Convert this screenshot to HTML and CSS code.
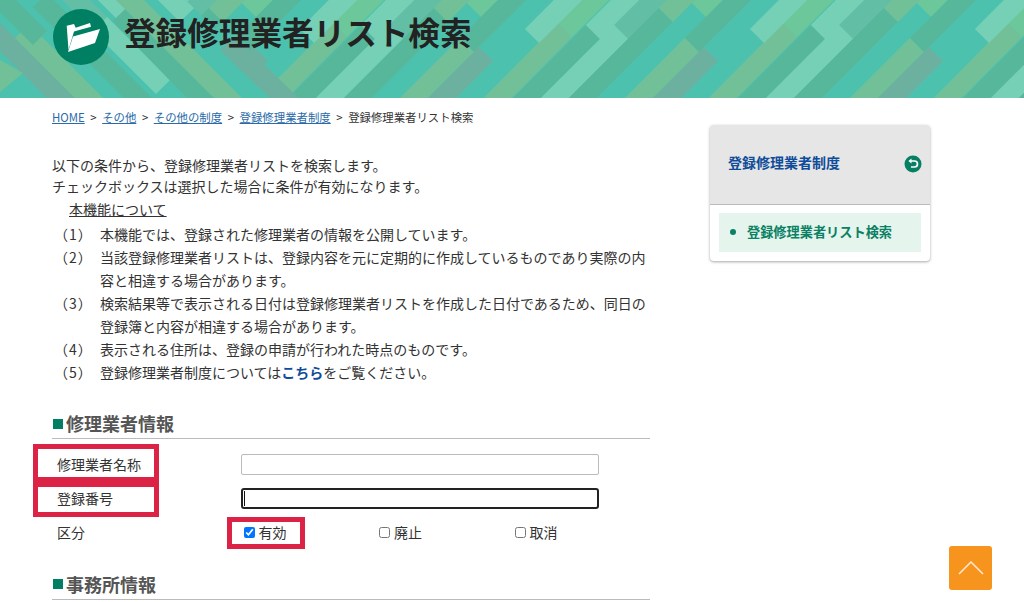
FILE: index.html
```html
<!DOCTYPE html>
<html lang="ja">
<head>
<meta charset="utf-8">
<title>登録修理業者リスト検索</title>
<link rel="stylesheet" href="styles.css">
</head>
<body>
<header class="banner">
  <svg class="banner-art" width="1024" height="98" viewBox="0 0 1024 98" aria-hidden="true">
    <defs>
      <pattern id="tile" width="225" height="98" patternUnits="userSpaceOnUse" patternTransform="translate(62 0)">
        <g fill="none" stroke-width="20">
          <line class="s-dark" x1="0" y1="113" x2="83" y2="30"/>
          <line class="s-mid" x1="108" y1="33" x2="158" y2="-17"/>
          <polyline class="s-light" points="28,113 102,39 88,25 130,-17"/>
          <line class="s-dark" x1="56" y1="113" x2="154" y2="15"/>
          <line class="s-olive" x1="154" y1="15" x2="186" y2="-17"/>
          <line class="s-teal" x1="84" y1="113" x2="187" y2="10"/>
          <line class="s-green" x1="187" y1="10" x2="214" y2="-17"/>
          <line class="s-olive" x1="112" y1="113" x2="180" y2="45"/>
          <line class="s-dark" x1="180" y1="45" x2="242" y2="-17"/>
          <line class="s-dark" x1="-45" y1="45" x2="17" y2="-17"/>
          <line class="s-gray" x1="140" y1="113" x2="199" y2="54"/>
          <line class="s-olive" x1="196" y1="113" x2="278" y2="30"/>
          <line class="s-olive" x1="-29" y1="113" x2="53" y2="30"/>
          <line class="s-green" x1="53" y1="30" x2="100" y2="-17"/>
          <line class="s-light" x1="20" y1="36" x2="73" y2="-17"/>
          <line class="s-light" x1="245" y1="36" x2="298" y2="-17"/>
        </g>
      </pattern>
      <clipPath id="right-part"><polygon points="186,0 1024,0 1024,98 284,98"/></clipPath>
    </defs>
    <rect class="f-teal" width="1024" height="98"/>
    <g fill="none" stroke-width="20">
      <line class="s-gray" x1="76" y1="113" x2="-30" y2="7"/>
      <line class="s-olive" x1="104" y1="113" x2="22" y2="31"/>
      <line class="s-dark" x1="40" y1="38" x2="-20" y2="-22"/>
      <line class="s-dark" x1="153" y1="113" x2="40" y2="0"/>
      <line class="s-mid" x1="120" y1="44" x2="60" y2="-16"/>
      <line class="s-light" x1="163" y1="87" x2="100" y2="24"/>
      <line class="s-light" x1="128" y1="16" x2="96" y2="-16"/>
      <line class="s-dark" x1="215" y1="113" x2="120" y2="14"/>
      <line class="s-olive" x1="243" y1="113" x2="114" y2="-16"/>
      <line class="s-light" x1="187" y1="15" x2="156" y2="-16"/>
    </g>
    <polygon class="f-olive" points="0,60 23,73 0,92"/>
    <rect width="1024" height="98" fill="url(#tile)" clip-path="url(#right-part)"/>
    <line class="s-gray" x1="300" y1="113" x2="227" y2="43" stroke-width="20"/>
  </svg>
  <span class="banner-icon">
    <svg width="56" height="56" viewBox="0 0 56 56" aria-hidden="true">
      <circle cx="28" cy="28" r="28" fill="#007f63"/>
      <path fill="#fff" d="M13.700 16.700 21 15l1.700 3.700L37 14l1 3.700-17 4.800L17 36l-1.500 5z"/>
      <path fill="#fff" d="M47 20 42 34 15 43l5-15.500z"/>
    </svg>
  </span>
  <h1 class="banner-title">登録修理業者リスト検索</h1>
</header>

<div class="page">
  <main class="main">
    <nav class="crumbs">
      <a href="#">HOME</a> &gt; <a href="#">その他</a> &gt; <a href="#">その他の制度</a> &gt; <a href="#">登録修理業者制度</a> &gt; 登録修理業者リスト検索
    </nav>

    <p class="intro">以下の条件から、登録修理業者リストを検索します。<br>チェックボックスは選択した場合に条件が有効になります。</p>
    <p class="about"><span>本機能について</span></p>
    <ol class="notes">
      <li><span class="mark">（1）</span><span>本機能では、登録された修理業者の情報を公開しています。</span></li>
      <li><span class="mark">（2）</span><span>当該登録修理業者リストは、登録内容を元に定期的に作成しているものであり実際の内容と相違する場合があります。</span></li>
      <li><span class="mark">（3）</span><span>検索結果等で表示される日付は登録修理業者リストを作成した日付であるため、同日の登録簿と内容が相違する場合があります。</span></li>
      <li><span class="mark">（4）</span><span>表示される住所は、登録の申請が行われた時点のものです。</span></li>
      <li><span class="mark">（5）</span><span>登録修理業者制度については<a class="strong-link" href="#">こちら</a>をご覧ください。</span></li>
    </ol>

    <h2 class="section-title"><i class="square"></i>修理業者情報</h2>
    <form class="form">
      <div class="row">
        <span class="label">修理業者名称</span>
        <input class="field" type="text">
        <b class="mark-box box-name"></b>
      </div>
      <div class="row">
        <span class="label">登録番号</span>
        <span class="field field-focus"><i class="caret"></i></span>
        <b class="mark-box box-number"></b>
      </div>
      <div class="row">
        <span class="label">区分</span>
        <div class="checks">
          <label class="check"><input type="checkbox" checked>有効</label>
          <label class="check"><input type="checkbox">廃止</label>
          <label class="check"><input type="checkbox">取消</label>
        </div>
        <b class="mark-box box-valid"></b>
      </div>
    </form>
    <h2 class="section-title second"><i class="square"></i>事務所情報</h2>
  </main>

  <aside class="side">
    <div class="side-head">
      <a class="side-link" href="#">登録修理業者制度</a>
      <svg class="side-back" width="18" height="18" viewBox="0 0 18 18" aria-hidden="true">
        <circle cx="9" cy="9" r="8.500" fill="#067f62"/>
        <path d="M6.500 6H10.500a3 3 0 0 1 0 6H7" fill="none" stroke="#fff" stroke-width="1.700"/>
        <path d="M7.500 3.600 4.400 6l3.100 2.400z" fill="#fff"/>
      </svg>
    </div>
    <div class="side-body">
      <a class="side-item" href="#"><i class="dot"></i>登録修理業者リスト検索</a>
    </div>
  </aside>
</div>

<a class="to-top" href="#" aria-label="ページの先頭へ">
  <svg width="26" height="14" viewBox="0 0 26 14" aria-hidden="true"><path d="M1 13 13 1l12 12" fill="none" stroke="#fff" stroke-opacity=".8" stroke-width="1.500"/></svg>
</a>
</body>
</html>
```

FILE: styles.css
```css
html, body { margin: 0; height: 602px; overflow: hidden; background: #fff; }
body { font-family: "Noto Sans CJK JP", "Noto Sans", sans-serif; color: #333; font-size: 14px; line-height: 21px; }

.banner { position: relative; height: 98px; display: flex; align-items: flex-start; padding-left: 53px; box-sizing: border-box; overflow: hidden; }
.banner-art { position: absolute; left: 0; top: 0; display: block; filter: blur(.6px); }
.s-dark { stroke: #56b79b; }
.s-light { stroke: #76d0b5; stroke-linejoin: miter; }
.s-mid { stroke: #62bfa5; }
.s-olive { stroke: #72c098; }
.s-green { stroke: #6cc89a; }
.s-teal { stroke: #4cc2ae; }
.s-gray { stroke: #6cb0a0; }
.f-teal { fill: #4cc2ae; }
.f-olive { fill: #72c098; }
.banner-icon { position: relative; width: 56px; height: 56px; margin-top: 9px; }
.banner-icon svg { display: block; }
.banner-title { position: relative; margin: 8px 0 0 15px; font-size: 31.600px; line-height: 46px; font-weight: 700; color: #222; white-space: nowrap; }

.page { display: flex; padding-left: 52px; }
.main { width: 598px; flex: none; }

.crumbs { margin-top: 10px; font-size: 11.400px; line-height: 18px; color: #333; white-space: nowrap; word-spacing: 3px; }
.crumbs a { color: #2a6aa8; }

.intro { margin: 29px 0 0; }
.about { margin: 0 0 0 17px; line-height: 24px; }
.about span { text-decoration: underline; }

.notes { list-style: none; margin: 2px 0 0; padding: 0; }
.notes li { display: flex; padding-left: 2px; line-height: 23px; }
.mark { flex: none; width: 46px; letter-spacing: 1px; }
.strong-link { color: #0f4c9a; font-weight: 700; text-decoration: none; }

.section-title { display: flex; align-items: center; margin: 25px 0 0; height: 29px; font-size: 18px; line-height: 29px; font-weight: 700; color: #555; border-bottom: 1px solid #bbb; }
.section-title.second { margin-top: 20px; height: 30px; }
.square { width: 10px; height: 10px; margin: 0 3px 0 1px; background: #007f63; }

.form { margin-top: 8px; }
.row { position: relative; display: flex; align-items: center; height: 34px; }
.label { flex: none; width: 184px; padding-left: 5px; box-sizing: border-box; white-space: nowrap; }
.field { flex: none; display: block; box-sizing: border-box; width: 358px; height: 21px; margin: 0 0 0 5px; padding: 0; border: 1px solid #bbb; border-radius: 2px; background: #fff; }
.field-focus { position: relative; border: 2px solid #222; border-radius: 3px; }
.caret { position: absolute; left: 1px; top: 1px; width: 1px; height: 15px; background: #111; }

.checks { display: flex; margin-left: 8px; }
.check { display: flex; align-items: center; width: 135.500px; gap: 4px; }
.check input { width: 11px; height: 11px; margin: 0 0 0 -0.500px; }

.mark-box { position: absolute; border: 5px solid #dc2346; box-sizing: border-box; pointer-events: none; }
.box-name { left: -19px; top: -3px; width: 126px; height: 38px; }
.box-number { left: -19px; top: 1px; width: 126px; height: 35px; }
.box-valid { left: 175px; top: 2px; width: 78px; height: 32px; }

.side { flex: none; width: 220px; margin: 27px 0 0 60px; height: 136px; border-radius: 4px; box-shadow: 0 1px 3px rgba(0, 0, 0, .35); background: #fff; }
.side-head { display: flex; align-items: center; justify-content: space-between; box-sizing: border-box; height: 80px; padding: 0 8px 5px 18px; background: #e6e6e6; border-bottom: 1px solid #bbb; border-radius: 4px 4px 0 0; }
.side-link { font-weight: 700; color: #0f4c9a; text-decoration: none; white-space: nowrap; }
.side-back { display: block; margin-top: 4px; }
.side-body { padding: 8px 9px; }
.side-item { display: flex; align-items: center; box-sizing: border-box; height: 39px; padding: 0 0 2px 11px; background: #e5f4ec; color: #0a8065; font-size: 13.200px; font-weight: 700; text-decoration: none; white-space: nowrap; }
.dot { width: 6px; height: 6px; margin-right: 11px; border-radius: 50%; background: #0a8065; }

.to-top { position: fixed; left: 949px; top: 546px; display: flex; align-items: center; justify-content: center; width: 43px; height: 44px; border-radius: 3px; background: #f7941e; }
.to-top svg { display: block; }
```
